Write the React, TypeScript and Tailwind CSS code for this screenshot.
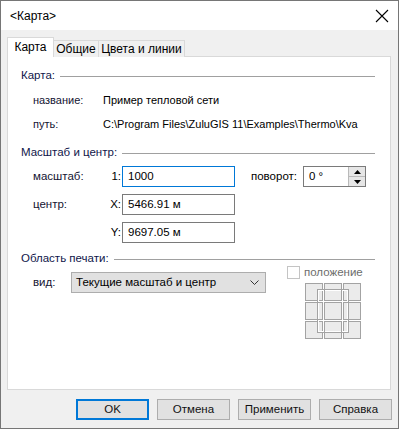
import React from "react";

const F = { fontFamily: '"Liberation Sans", Arial, sans-serif' };

function Header({ text }: { text: string }) {
  return (
    <div className="flex items-center h-[16px] pl-[13px] pr-[15px]">
      <span className="text-[11.5px] text-[#10164a] leading-none whitespace-nowrap">{text}</span>
      <div className="flex-1 h-0 border-t border-[#a0a0a0] ml-[5px]" />
    </div>
  );
}

function Input({ value, focused }: { value: string; focused?: boolean }) {
  return (
    <div
      className={
        "w-[113px] h-[21px] bg-white flex items-center pl-[5px] text-[11.5px] text-black " +
        (focused ? "border border-[#0078d7]" : "border border-[#7a7a7a]")
      }
    >
      {value}
    </div>
  );
}

function Grid() {
  const cells: React.ReactNode[] = [];
  const xs = [0.5, 19.5, 38.5];
  for (const y of xs) {
    for (const x of xs) {
      cells.push(
        <rect key={`${x}-${y}`} x={x} y={y} width={17} height={17} fill="#ebebeb" stroke="#a3a3a3" />
      );
    }
  }
  return (
    <svg width="57" height="57" viewBox="0 0 57 57">
      {cells}
      <rect x={12.5} y={6.5} width={31} height={43} fill="none" stroke="#a3a3a3" />
      <rect x={13.5} y={7.5} width={29} height={41} fill="none" stroke="#ffffff" />
      <rect x={19.5} y={0.5} width={17} height={17} fill="none" stroke="#a3a3a3" />
      <rect x={19.5} y={19.5} width={17} height={17} fill="none" stroke="#a3a3a3" />
      <rect x={19.5} y={38.5} width={17} height={17} fill="none" stroke="#a3a3a3" />
      <rect x={0.5} y={19.5} width={17} height={17} fill="none" stroke="#a3a3a3" />
      <rect x={38.5} y={19.5} width={17} height={17} fill="none" stroke="#a3a3a3" />
    </svg>
  );
}

function Button({ label, primary }: { label: string; primary?: boolean }) {
  return (
    <div
      className={
        "w-[73px] h-[21px] bg-[#e1e1e1] flex items-center justify-center text-[11.5px] font-normal text-[#111] " +
        (primary ? "border-2 border-[#0078d7]" : "border border-[#adadad]")
      }
    >
      {label}
    </div>
  );
}

export default function App() {
  return (
    <div style={F} className="w-[399px] h-[429px] border border-[#767676] bg-[#f0f0f0] flex flex-col overflow-hidden">
      {/* title bar */}
      <div className="h-[29px] bg-white flex items-center justify-between pl-[9px] pr-[7px] shrink-0">
        <span className="text-[12px] text-black">&lt;Карта&gt;</span>
        <svg width="16" height="16" viewBox="0 0 16 16" className="mr-[1px]">
          <path d="M2 2 L14 14 M14 2 L2 14" stroke="#000" strokeWidth="1.1" />
        </svg>
      </div>

      {/* tabs */}
      <div className="flex items-end pl-[6px] mt-[7px] h-[20px] relative z-10 shrink-0 text-[12px] text-black whitespace-nowrap">
        <div className="h-[20px] w-[47px] bg-white border border-b-0 border-[#d9d9d9] flex items-center justify-center pb-[1px]">
          Карта
        </div>
        <div className="h-[17px] w-[45px] bg-[#f0f0f0] border border-l-0 border-b-0 border-[#d9d9d9] flex items-center justify-center">
          Общие
        </div>
        <div className="h-[17px] w-[86px] bg-[#f0f0f0] border border-l-0 border-b-0 border-[#d9d9d9] flex items-center justify-center">
          Цвета и линии
        </div>
      </div>

      {/* panel */}
      <div className="ml-[6px] w-[384px] h-[334px] -mt-[1px] bg-white border border-[#d9d9d9] shrink-0 flex flex-col pt-[11px] text-[11px]">
        <Header text="Карта:" />
        <div className="flex items-center h-[16px] mt-[8px] text-[11px] text-[#141432]">
          <span className="pl-[25px] w-[95px]">название:</span>
          <span className="text-black">Пример тепловой сети</span>
        </div>
        <div className="flex items-center h-[16px] mt-[8px] text-[11px] text-[#141432]">
          <span className="pl-[25px] w-[95px]">путь:</span>
          <span className="text-black whitespace-nowrap">C:\Program Files\ZuluGIS 11\Examples\Thermo\Kva</span>
        </div>

        <div className="mt-[13px]">
          <Header text="Масштаб и центр:" />
        </div>
        <div className="flex items-center h-[21px] mt-[5px] text-[11.5px] text-[#141432]">
          <span className="pl-[25px] w-[101px]">масштаб:</span>
          <span className="w-[12px] text-right text-black mr-[1px]">1:</span>
          <Input value="1000" focused />
          <span className="ml-[16px] w-[52px] text-black">поворот:</span>
          <div className="w-[63px] h-[21px] border border-[#7a7a7a] bg-white flex">
            <div className="flex-1 flex items-center pl-[5px] text-black">0 °</div>
            <div className="w-[17px] h-full flex flex-col border-l border-[#b9b9b9] bg-[#e6e6e6]">
              <div className="flex-1 flex items-center justify-center border-b border-[#b9b9b9]">
                <svg width="7" height="4" viewBox="0 0 7 4"><path d="M0 4 L3.5 0 L7 4 Z" fill="#000" /></svg>
              </div>
              <div className="flex-1 flex items-center justify-center">
                <svg width="7" height="4" viewBox="0 0 7 4"><path d="M0 0 L3.5 4 L7 0 Z" fill="#000" /></svg>
              </div>
            </div>
          </div>
        </div>
        <div className="flex items-center h-[21px] mt-[7px] text-[11.5px] text-[#141432]">
          <span className="pl-[25px] w-[101px]">центр:</span>
          <span className="w-[12px] text-right text-black mr-[1px]">X:</span>
          <Input value="5466.91 м" />
        </div>
        <div className="flex items-center h-[21px] mt-[7px] text-[11.5px] text-[#141432]">
          <span className="pl-[25px] w-[101px]"></span>
          <span className="w-[12px] text-right text-black mr-[1px]">Y:</span>
          <Input value="9697.05 м" />
        </div>

        <div className="mt-[8px]">
          <Header text="Область печати:" />
        </div>
        <div className="flex">
          <div className="flex items-center h-[21px] mt-[5px] text-[11.5px] text-[#141432]">
            <span className="pl-[25px] w-[63px]">вид:</span>
            <div className="w-[195px] h-[21px] bg-[#e1e1e1] border border-[#adadad] flex items-center justify-between pl-[4px] pr-[6px] text-black">
              <span>Текущие масштаб и центр</span>
              <svg width="9" height="5" viewBox="0 0 9 5"><path d="M0.5 0.5 L4.5 4.5 L8.5 0.5" fill="none" stroke="#333" strokeWidth="1" /></svg>
            </div>
          </div>
          <div className="ml-[21px] -mt-[1px] flex flex-col">
            <div className="flex items-center h-[13px]">
              <div className="w-[13px] h-[13px] border border-[#c4c4c4] bg-white" />
              <span className="ml-[4px] text-[11.5px] text-[#6d6d6d]">положение</span>
            </div>
            <div className="ml-[18px] mt-[4px]">
              <Grid />
            </div>
          </div>
        </div>
      </div>

      {/* buttons */}
      <div className="flex justify-end gap-[8px] pr-[6px] mt-[9px]">
        <Button label="OK" primary />
        <Button label="Отмена" />
        <Button label="Применить" />
        <Button label="Справка" />
      </div>
    </div>
  );
}
